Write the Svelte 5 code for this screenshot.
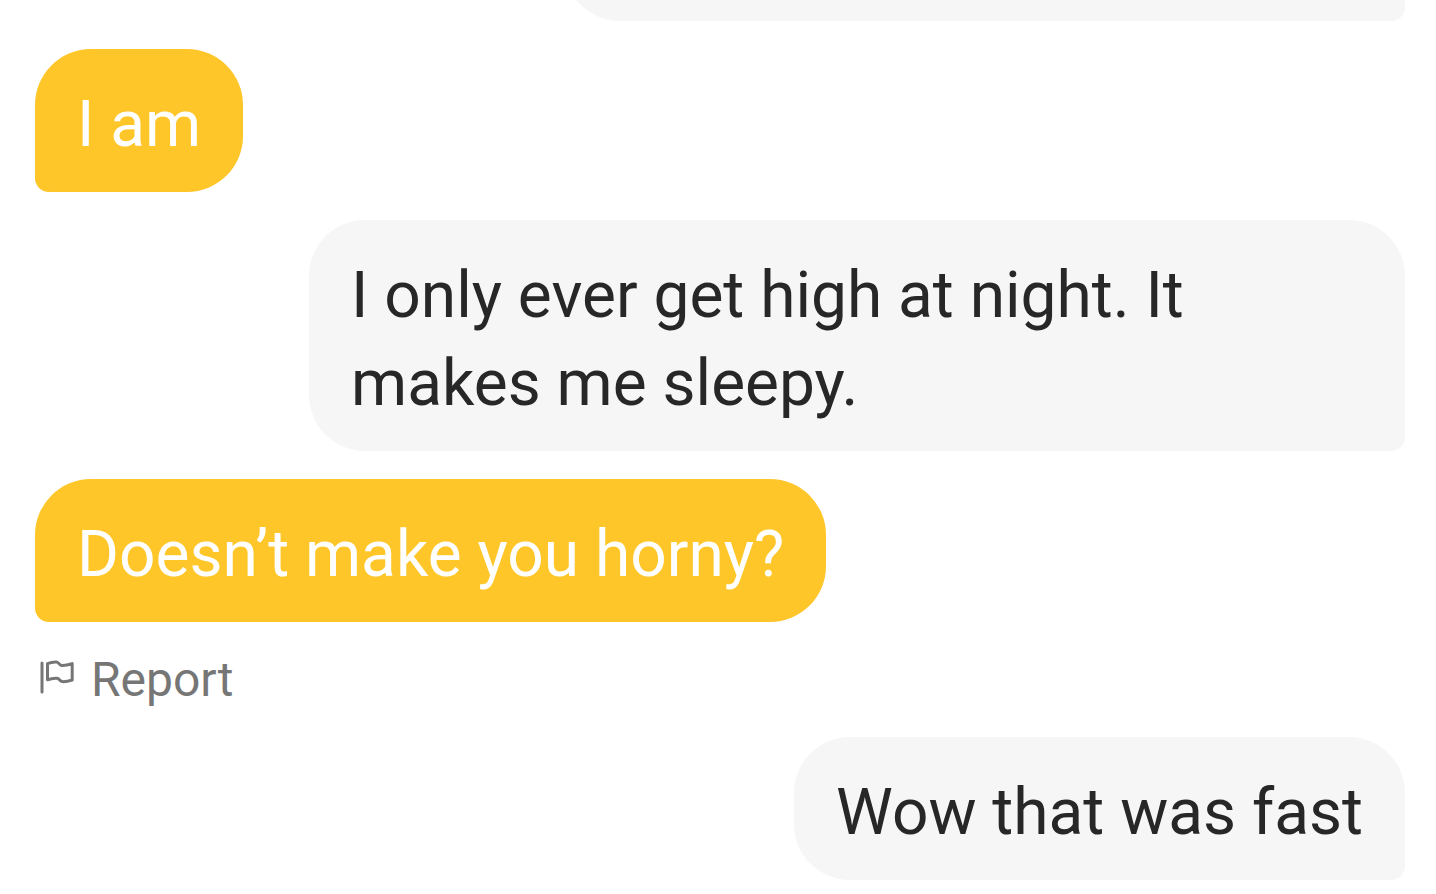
<script lang="ts">
    type Message = { id: number, text: string, mine: boolean, reportable?: boolean };

    const messages: Message[] = [
        { id: 1, text: "I am", mine: false },
        { id: 2, text: "I only ever get high at night. It makes me sleepy.", mine: true },
        { id: 3, text: "Doesn’t make you horny?", mine: false, reportable: true },
        { id: 4, text: "Wow that was fast", mine: true }
    ];
</script>

<main class="chat">
    <div class="bubble mine previous"></div>

    {#each messages as message (message.id)}
        <p class="bubble" class:mine={message.mine}>{message.text}</p>

        {#if message.reportable}
            <button class="report" type="button">
                <svg viewBox="0 0 36 39" aria-hidden="true">
                    <path d="M3 3V32" />
                    <path d="M8.5 3.7C11.5 2.4 14.5 1.8 17.5 2C20 2.2 20 5.2 22.5 5.4C26 5.6 29.5 4.8 33.2 3.6V20C29.5 21.2 26.5 21.8 23.5 21.6C20.5 21.4 20.5 18.4 18 18.2C14.5 17.9 11.5 18.6 8.5 19.8Z" />
                </svg>
                Report
            </button>
        {/if}
    {/each}
</main>

<style>
    :global(body) {
        margin: 0;
        background: #fff;
    }

    .chat {
        display: flex;
        flex-direction: column;
        align-items: flex-start;
        gap: 28px;
        padding: 0 31px 14px 35px;
        font-family: Roboto, sans-serif;
        overflow: hidden;
    }

    .bubble {
        box-sizing: border-box;
        max-width: 80%;
        margin: 0;
        padding: 32px 42px 23px;
        border-radius: 56px 56px 56px 14px;
        background: #ffc629;
        color: #fff;
        font-size: 64px;
        line-height: 88px;
    }

    .mine {
        align-self: flex-end;
        border-radius: 56px 56px 14px 56px;
        background: #f6f6f6;
        color: #272727;
    }

    /* tail end of the message scrolled above the view */
    .previous {
        width: 61.4%;
        height: 143px;
        margin-top: -122px;
    }

    .report {
        display: flex;
        align-items: center;
        gap: 16px;
        padding: 0 4px;
        border: none;
        background: none;
        color: #767676;
        font-family: inherit;
        font-size: 48px;
        line-height: 59px;
    }

    .report svg {
        width: 36px;
        height: 39px;
        fill: none;
        stroke: currentColor;
        stroke-width: 3;
        stroke-linecap: round;
        stroke-linejoin: round;
    }
</style>
